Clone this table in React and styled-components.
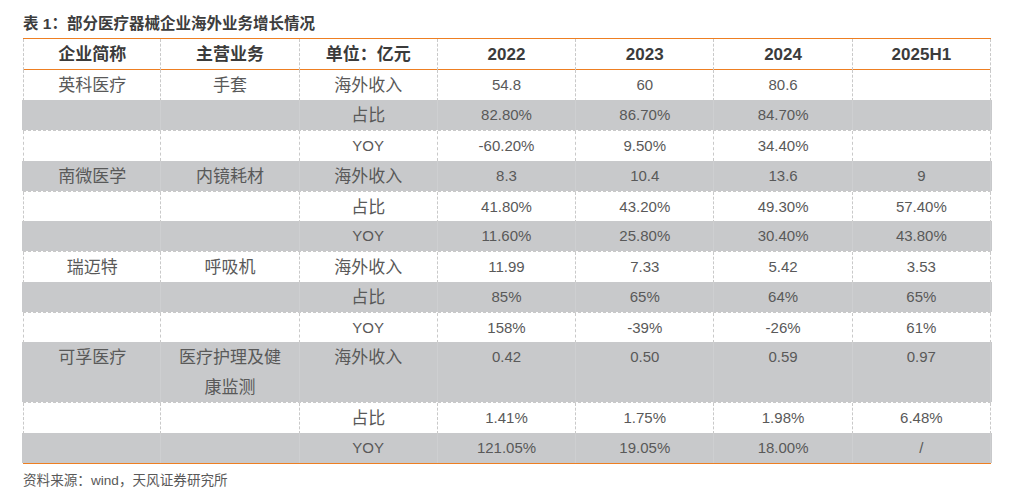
import React from 'react';
import styled, { createGlobalStyle } from 'styled-components';

const ORANGE = '#EE7F22';
const DASH = '#c9c9c9';
const SHADE = '#C8C9CB';
const UNIT = 30.23;

const Global = createGlobalStyle`
  html, body { margin: 0; padding: 0; background: #fff; }
  body { font-family: "Liberation Sans", "Noto Sans CJK SC", sans-serif; }
`;

const Page = styled.div`
  width: 1011px;
  height: 498px;
  box-sizing: border-box;
  padding: 14px 0 0 23px;
`;

const Title = styled.h1`
  margin: 0 0 4px;
  font-size: 15.5px;
  line-height: 20px;
  font-weight: 700;
  color: #3d3d3d;
`;

const Table = styled.div`
  width: 968px;
  border-top: 1px solid ${ORANGE};
  border-bottom: 1px solid ${ORANGE};
`;

const Row = styled.div`
  display: grid;
  grid-template-columns: repeat(7, 1fr);
  box-sizing: border-box;
  height: ${(p) => (p.$head ? 31 : p.$units * UNIT)}px;
  background: ${(p) => (p.$shade ? SHADE : '#fff')};
  margin: ${(p) => (p.$shade ? '0 -1px' : '0')};
  padding: ${(p) => (p.$shade ? '0 1px' : '0')};
  border-top: ${(p) => (!p.$shade && !p.$head && !p.$first ? `1px dashed ${DASH}` : 'none')};
  border-bottom: ${(p) => (p.$head ? `1px solid ${ORANGE}` : 'none')};
`;

const Cell = styled.div`
  display: flex;
  justify-content: center;
  align-items: ${(p) => (p.$head ? 'center' : 'flex-start')};
  text-align: center;
  box-sizing: border-box;
  padding: ${(p) => (p.$cjk ? '1px' : '0')} 12px 0;
  line-height: 30px;
  font-size: ${(p) => (p.$cjk ? 17 : p.$head ? 17 : 15)}px;
  font-weight: ${(p) => (p.$head ? 700 : 400)};
  color: ${(p) => (p.$head ? '#3b3b3b' : '#595959')};
  border-right: 1px ${(p) => (p.$shade ? 'solid rgba(255,255,255,0.12)' : `dashed ${DASH}`)};
  &:first-child {
    border-left: 1px ${(p) => (p.$shade ? 'solid transparent' : `dashed ${DASH}`)};
  }
`;

const Note = styled.p`
  margin: 7px 0 0;
  font-size: 13.6px;
  line-height: 20px;
  color: #595959;
`;

const header = ['企业简称', '主营业务', '单位：亿元', '2022', '2023', '2024', '2025H1'];

const rows = [
  { shade: false, cells: ['英科医疗', '手套', '海外收入', '54.8', '60', '80.6', ''] },
  { shade: true, cells: ['', '', '占比', '82.80%', '86.70%', '84.70%', ''] },
  { shade: false, cells: ['', '', 'YOY', '-60.20%', '9.50%', '34.40%', ''] },
  { shade: true, cells: ['南微医学', '内镜耗材', '海外收入', '8.3', '10.4', '13.6', '9'] },
  { shade: false, cells: ['', '', '占比', '41.80%', '43.20%', '49.30%', '57.40%'] },
  { shade: true, cells: ['', '', 'YOY', '11.60%', '25.80%', '30.40%', '43.80%'] },
  { shade: false, cells: ['瑞迈特', '呼吸机', '海外收入', '11.99', '7.33', '5.42', '3.53'] },
  { shade: true, cells: ['', '', '占比', '85%', '65%', '64%', '65%'] },
  { shade: false, cells: ['', '', 'YOY', '158%', '-39%', '-26%', '61%'] },
  { shade: true, units: 2, cells: ['可孚医疗', '医疗护理及健康监测', '海外收入', '0.42', '0.50', '0.59', '0.97'] },
  { shade: false, cells: ['', '', '占比', '1.41%', '1.75%', '1.98%', '6.48%'] },
  { shade: true, cells: ['', '', 'YOY', '121.05%', '19.05%', '18.00%', '/'] },
];

const isCjk = (t) => /[\u3000-\u9fff\uff00-\uffef]/.test(t);

export default function App() {
  return (
    <Page>
      <Global />
      <Title>表 1：部分医疗器械企业海外业务增长情况</Title>
      <Table>
        <Row $head>
          {header.map((h) => (
            <Cell key={h} $head $cjk={isCjk(h)}>
              {h}
            </Cell>
          ))}
        </Row>
        {rows.map((r, i) => (
          <Row key={i} $shade={r.shade} $units={r.units || 1} $first={i === 0}>
            {r.cells.map((c, j) => (
              <Cell key={j} $shade={r.shade} $cjk={isCjk(c)}>
                {c}
              </Cell>
            ))}
          </Row>
        ))}
      </Table>
      <Note>资料来源：wind，天风证券研究所</Note>
    </Page>
  );
}
